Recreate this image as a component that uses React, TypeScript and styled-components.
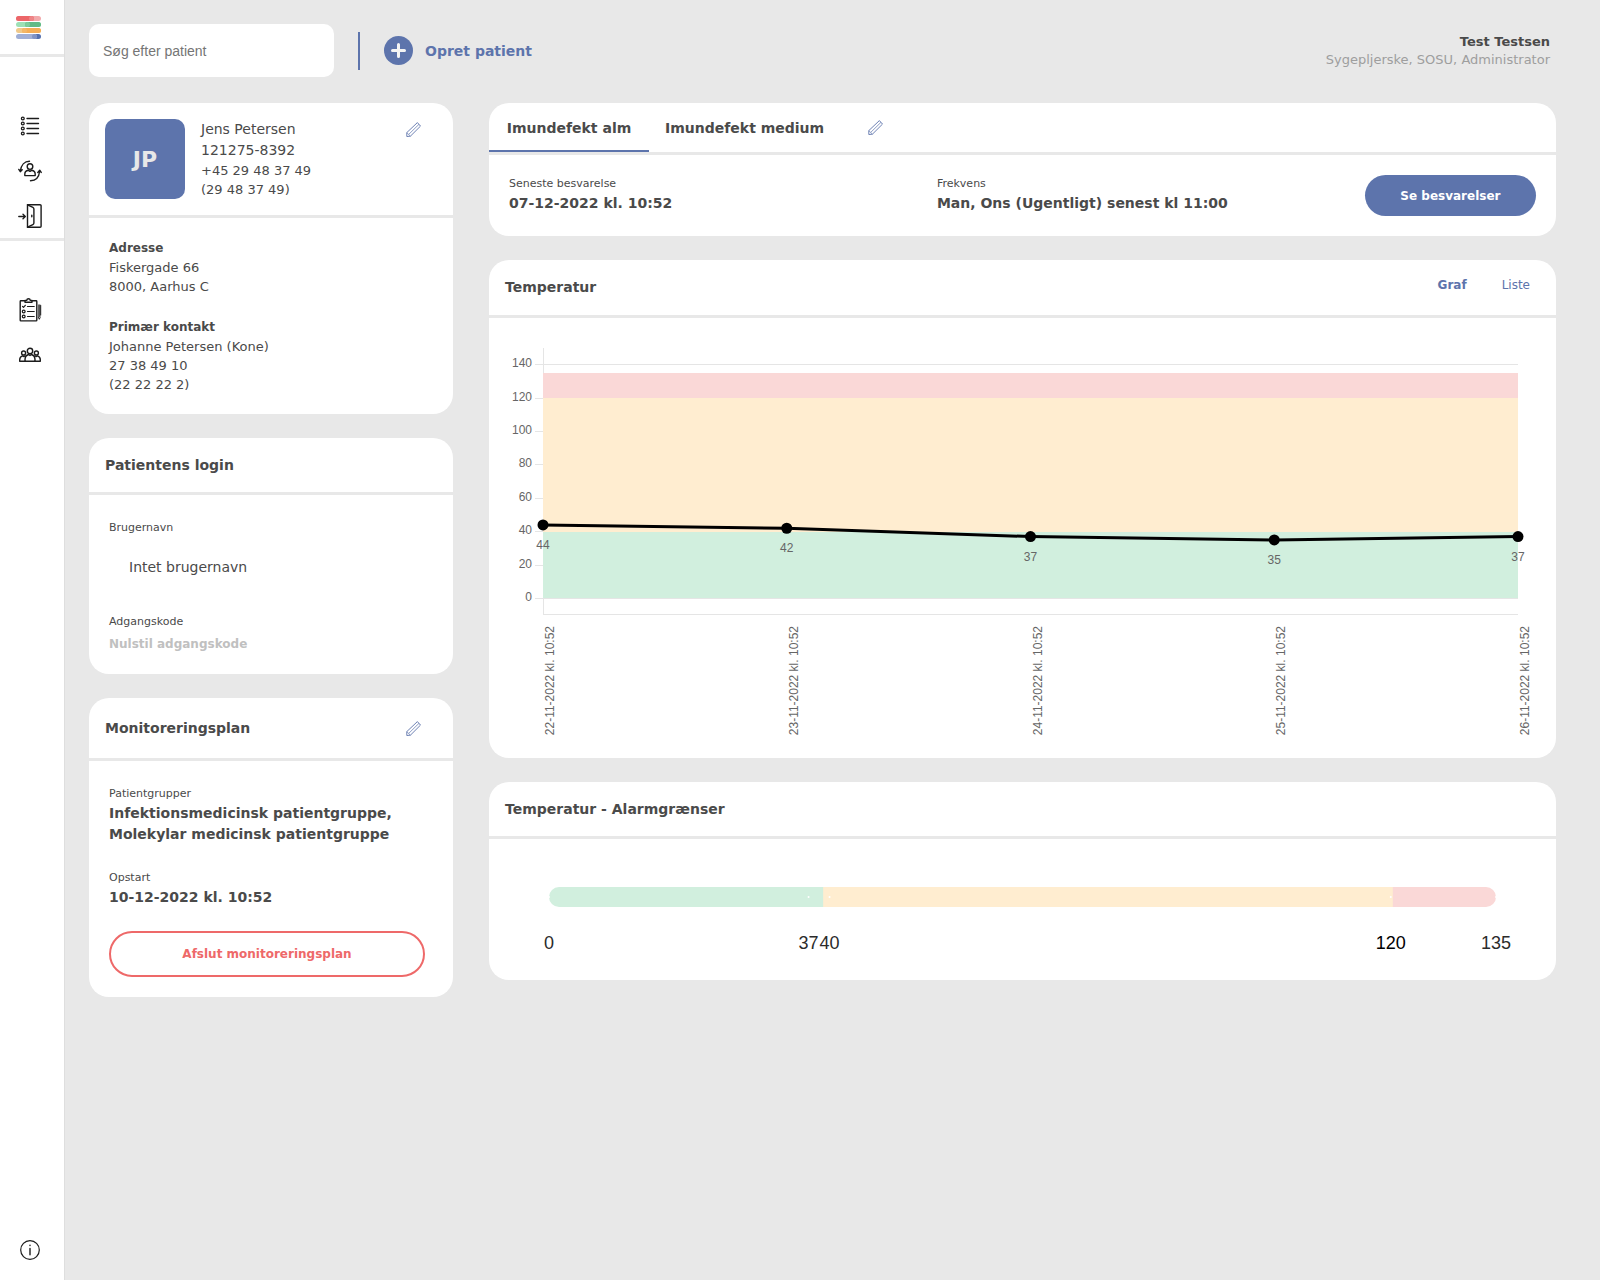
import React, { useState } from "react";
import styled, { createGlobalStyle } from "styled-components";

const color = {
  page: "#e8e8e8",
  card: "#ffffff",
  text: "#4a4a4a",
  muted: "#9e9e9e",
  disabled: "#c0c0c0",
  blue: "#5d74ac",
  red: "#ee6969",
  grid: "#e5e5e5",
  chartText: "#666666",
  bandRed: "#fad8d7",
  bandYellow: "#ffedd0",
  bandGreen: "#d1efde",
};

const sans = `"DejaVu Sans", Verdana, sans-serif`;
const arial = `"Liberation Sans", Arial, sans-serif`;

const GlobalStyle = createGlobalStyle`
  *, *::before, *::after { box-sizing: border-box; }
  body {
    margin: 0;
    background: ${color.page};
    color: ${color.text};
    font-family: ${sans};
  }
  button { font-family: inherit; cursor: pointer; }
`;

/* ---------- Shell ---------- */

const Shell = styled.div`
  display: flex;
  min-height: 100vh;
`;

const Sidebar = styled.nav`
  flex: none;
  width: 65px;
  display: flex;
  flex-direction: column;
  background: ${color.card};
  border-right: 1px solid #dedede;
`;

const LogoLink = styled.a`
  display: block;
  height: 57px;
  padding: 16px 0 0 16px;
  border-bottom: 3px solid ${color.page};
`;

const NavGroup = styled.div<{ $divided?: boolean }>`
  display: flex;
  flex-direction: column;
  padding-top: 46px;
  border-bottom: ${(p) => (p.$divided ? `3px solid ${color.page}` : "none")};
`;

const NavFooter = styled.div`
  margin-top: auto;
  padding-bottom: 8px;
`;

const NavLink = styled.a`
  display: flex;
  align-items: center;
  height: 45px;
  padding-left: 18px;
`;

const Main = styled.main`
  flex: 1;
  min-width: 0;
  padding: 24px 44px 24px 24px;
`;

const TopBar = styled.header`
  display: flex;
  align-items: center;
  gap: 24px;
  margin-bottom: 26px;
`;

const SearchBox = styled.input`
  width: 245px;
  height: 53px;
  padding: 0 14px;
  border: 0;
  border-radius: 10px;
  background: ${color.card};
  color: ${color.text};
  font: 14px ${arial};
  &::placeholder { color: #757575; }
`;

const Separator = styled.span`
  width: 2px;
  height: 38px;
  background: ${color.blue};
`;

const CreateButton = styled.button`
  display: flex;
  align-items: center;
  gap: 12px;
  padding: 0;
  border: 0;
  background: none;
  color: ${color.blue};
  font-size: 14px;
  font-weight: 700;
`;

const UserInfo = styled.div`
  margin-left: auto;
  padding-right: 6px;
  text-align: right;
  font-size: 13px;
  line-height: 18px;
`;

const UserRole = styled.div`
  color: ${color.muted};
`;

const Columns = styled.div`
  display: grid;
  grid-template-columns: 364px minmax(0, 1fr);
  gap: 36px;
  align-items: start;
`;

const Column = styled.div`
  display: grid;
  gap: 24px;
`;

/* ---------- Cards ---------- */

const Card = styled.section`
  overflow: hidden;
  border-radius: 20px;
  background: ${color.card};
`;

const CardHeader = styled.div<{ $height: number }>`
  display: flex;
  align-items: center;
  justify-content: space-between;
  height: ${(p) => p.$height}px;
  padding: 0 24px 0 16px;
  border-bottom: 3px solid ${color.page};
`;

const CardTitle = styled.h2`
  margin: 0;
  font-size: 14px;
  line-height: 21px;
`;

const CardBody = styled.div<{ $top: number }>`
  padding: ${(p) => p.$top}px 20px 20px;
`;

const IconButton = styled.button`
  display: flex;
  padding: 8px;
  border: 0;
  background: none;
  color: ${color.blue};
`;

const PersonHeader = styled.div`
  display: flex;
  align-items: flex-start;
  gap: 16px;
  padding: 16px 24px 16px 16px;
  border-bottom: 3px solid ${color.page};
  ${IconButton} { margin-left: auto; margin-top: -5px; }
`;

const Avatar = styled.div`
  display: grid;
  place-items: center;
  width: 80px;
  height: 80px;
  border-radius: 10px;
  background: ${color.blue};
  color: ${color.page};
  font-size: 22px;
  font-weight: 700;
`;

const Line = styled.div<{ $small?: boolean }>`
  font-size: ${(p) => (p.$small ? 13 : 14)}px;
  line-height: ${(p) => (p.$small ? 19 : 21)}px;
`;

const Block = styled.div`
  & + & { margin-top: 21px; }
`;

const BlockTitle = styled.h3`
  margin: 0;
  font-size: 12px;
  line-height: 20px;
`;

const Field = styled.div<{ $after?: number }>`
  margin-bottom: ${(p) => p.$after ?? 0}px;
`;

const FieldLabel = styled.div`
  font-size: 11px;
  line-height: 18px;
`;

const FieldValue = styled.div`
  font-size: 14px;
  font-weight: 700;
  line-height: 21px;
`;

const UserName = styled(Line)`
  padding: 20px;
`;

const ResetButton = styled.button`
  display: block;
  padding: 3px 0 0;
  border: 0;
  background: none;
  color: ${color.disabled};
  font-size: 12px;
  font-weight: 700;
  line-height: 20px;
`;

const EndPlanButton = styled.button`
  display: block;
  width: calc(100% - 8px);
  height: 46px;
  border: 2px solid ${color.red};
  border-radius: 23px;
  background: none;
  color: ${color.red};
  font-size: 12px;
  font-weight: 700;
`;

const TabBar = styled.div`
  display: flex;
  align-items: center;
  border-bottom: 3px solid ${color.page};
  ${IconButton} { margin-left: 20px; }
`;

const Tab = styled.button<{ $active: boolean }>`
  min-width: 160px;
  height: 49px;
  padding: 2px 16px 0;
  border: 0;
  border-bottom: 2px solid ${(p) => (p.$active ? color.blue : "transparent")};
  background: none;
  color: ${color.text};
  font-size: 14px;
  font-weight: 700;
`;

const PlanSummary = styled.div`
  display: grid;
  grid-template-columns: 5fr 5fr 2fr;
  padding: 20px;
`;

const AnswersButton = styled.button`
  height: 41px;
  border: 0;
  border-radius: 21px;
  background: ${color.blue};
  color: #fff;
  font-size: 12px;
  font-weight: 700;
`;

const ViewSwitch = styled.div`
  display: flex;
  gap: 35px;
  padding: 0 2px 6px 0;
`;

const ViewButton = styled.button<{ $active: boolean }>`
  padding: 0;
  border: 0;
  background: none;
  color: ${color.blue};
  font-size: 12px;
  font-weight: ${(p) => (p.$active ? 700 : 400)};
`;

const ChartArea = styled.div`
  padding: 30px 38px 24px 54px;
`;

const GaugeArea = styled.div`
  padding: 48px 60px 20px;
`;

const Drawing = styled.svg<{ $height: number }>`
  display: block;
  width: 100%;
  height: ${(p) => p.$height}px;
  overflow: visible;
`;

const ChartText = styled.text`
  fill: ${color.chartText};
  font: 12px ${arial};
`;

const GaugeText = styled.text<{ $dark?: boolean }>`
  fill: ${(p) => (p.$dark ? "#000" : "#2b2b2b")};
  font: 18px ${arial};
  text-anchor: middle;
`;

/* ---------- Icons ---------- */

const Logo = () => (
  <svg width="25" height="24" viewBox="0 0 25 24" aria-hidden="true">
    <rect width="25" height="5" rx="2.5" fill="#f2a9ab" />
    <rect width="18" height="5" rx="2.5" fill="#ec6669" />
    <circle cx="15.5" cy="2.5" r="2.5" fill="#ee8587" />
    <rect y="6" width="25" height="5" rx="2.5" fill="#9ce0b5" />
    <rect x="9" y="6" width="16" height="5" rx="2.5" fill="#62ba86" />
    <circle cx="11.5" cy="8.5" r="2.5" fill="#7ccb9b" />
    <rect y="12" width="25" height="5" rx="2.5" fill="#f0c98a" />
    <rect x="6" y="12" width="19" height="5" rx="2.5" fill="#f5ad55" />
    <circle cx="8.5" cy="14.5" r="2.5" fill="#f3b768" />
    <rect x="14" y="18" width="11" height="5" rx="2.5" fill="#5470af" />
    <rect y="18" width="21" height="5" rx="2.5" fill="#a0afd6" />
    <circle cx="18.5" cy="20.5" r="2.5" fill="#8093c4" />
  </svg>
);

const LineIcon = ({ children }: { children: React.ReactNode }) => (
  <svg
    width="24"
    height="24"
    viewBox="0 0 24 24"
    fill="none"
    stroke="#1c1c1c"
    strokeWidth="1.4"
    strokeLinecap="round"
    strokeLinejoin="round"
    aria-hidden="true"
  >
    {children}
  </svg>
);

const ListIcon = () => (
  <LineIcon>
    {[4.5, 9.5, 14.5, 19.5].map((y) => (
      <g key={y}>
        <circle cx="4.8" cy={y} r="1.4" strokeWidth="1.3" />
        <path d={`M9 ${y}H20.5`} />
      </g>
    ))}
  </LineIcon>
);

const PatientCycleIcon = () => (
  <LineIcon>
    <circle cx="12" cy="7.6" r="2.8" />
    <path d="M6.8 16.6v-1.4c0-2.2 1.8-3.6 3.6-3.9l1.6 1 1.6-1c1.8.3 3.6 1.7 3.6 3.9v1.4z" />
    <path d="M11.5 2.2C6.600 2.200 3 6 2.300 12.200M.8 10.400l1.500 2.300 1.900-1.900" />
    <path d="M12.500 21.800c4.900 0 8.500-3.600 9.200-9.800M19.800 13.400l1.900-2.200 1.500 2.200" />
  </LineIcon>
);

const DoorIcon = () => (
  <LineIcon>
    <path d="M9.500.8h12.600a1 1 0 0 1 1 1v20.400a1 1 0 0 1-1 1H9.500z" />
    <path d="M9.500.8l5.400 2.600q1 .5 1 1.600v14q0 1.100-1 1.600l-5.400 2.600M13.800 11.200v1.600" />
    <path d="M.8 12.500h6.400M5 10.300l2.300 2.200L5 14.700" />
  </LineIcon>
);

const ClipboardIcon = () => (
  <LineIcon>
    <path d="M7 2.800H2.900a.7.700 0 0 0-.7.700v18.700a.7.700 0 0 0 .7.700h15.200a.7.700 0 0 0 .7-.700V3.500a.7.700 0 0 0-.7-.700h-4.100" />
    <path d="M7 4.200V2.400h1.700C9 .2 12 .2 12.300 2.400H14v1.800z" />
    <path d="M4.500 8.300l1 1 1.800-2M9.500 8.500h6.700M9.500 13.500h6.700M9.500 18.500h6.700" strokeWidth="1.200" />
    <circle cx="5.700" cy="13.500" r="1.400" strokeWidth="1.200" />
    <circle cx="5.700" cy="18.500" r="1.400" strokeWidth="1.200" />
    <path d="M21.300 6.500v12.500" stroke="#555" strokeWidth="2.400" strokeLinecap="butt" />
    <path d="M22.700 7.500V17M20.500 19.500l.8 1.800.8-1.800" strokeWidth="1" />
  </LineIcon>
);

const PeopleIcon = () => (
  <LineIcon>
    <circle cx="12" cy="8" r="2.700" />
    <circle cx="5.600" cy="10" r="2" />
    <circle cx="18.400" cy="10" r="2" />
    <path d="M7 18.200v-1.500c0-3 2-4.700 3.600-5.200l1.400 1 1.400-1c1.600.5 3.600 2.200 3.600 5.200v1.500z" />
    <path d="M7 18.200H1.700v-1.400c0-2.100 1.300-3.500 2.700-4l1.200.7 1.500-.7" />
    <path d="M17 18.200h5.300v-1.400c0-2.100-1.300-3.500-2.700-4l-1.200.7-1.500-.7" />
  </LineIcon>
);

const InfoIcon = () => (
  <LineIcon>
    <circle cx="12" cy="12" r="9.300" strokeWidth="1.200" />
    <path d="M12 10.500v6.200M12 7.200v.3" />
  </LineIcon>
);

const PencilIcon = () => (
  <svg
    width="15"
    height="15"
    viewBox="0 0 15 15"
    fill="none"
    stroke="currentColor"
    strokeLinejoin="round"
    aria-hidden="true"
  >
    <path d="M.8 10.600L11.400.6l3.100 3.500L4.400 14.200l-3.600.3z" strokeWidth="0.900" />
    <path d="M.8 10.600l3.600 3.600M2.800 12.300L12.900 2.400" strokeWidth="0.700" />
  </svg>
);

const PlusIcon = () => (
  <svg width="29" height="29" viewBox="0 0 29 29" aria-hidden="true">
    <circle cx="14.500" cy="14.500" r="14.500" fill={color.blue} />
    <path d="M14.500 8.500v12M8.500 14.500h12" stroke="#f4f4f4" strokeWidth="3" strokeLinecap="round" />
  </svg>
);

/* ---------- Chart ---------- */

const readings = [
  { label: "22-11-2022 kl. 10:52", value: 44 },
  { label: "23-11-2022 kl. 10:52", value: 42 },
  { label: "24-11-2022 kl. 10:52", value: 37 },
  { label: "25-11-2022 kl. 10:52", value: 35 },
  { label: "26-11-2022 kl. 10:52", value: 37 },
];

const bands = [
  { from: 0, to: 40, fill: color.bandGreen },
  { from: 40, to: 120, fill: color.bandYellow },
  { from: 120, to: 135, fill: color.bandRed },
];

const yOf = (value: number) => 250.4 - value * 1.67;
const xOf = (index: number) => `${(index * 100) / (readings.length - 1)}%`;

const TemperatureChart = () => (
  <Drawing $height={386} role="img" aria-label="Temperatur">
    {[0, 20, 40, 60, 80, 100, 120, 140].map((v) => {
      const y = Math.floor(yOf(v)) + 0.5;
      return (
        <g key={v}>
          <line x1="-8" x2="100%" y1={y} y2={y} stroke={color.grid} />
          <ChartText x="-11" y={Math.floor(y) + 3} textAnchor="end">
            {v}
          </ChartText>
        </g>
      );
    })}
    {bands.map((b) => (
      <rect
        key={b.from}
        x="0"
        width="100%"
        y={Math.round(yOf(b.to))}
        height={Math.round(yOf(b.from)) - Math.round(yOf(b.to))}
        fill={b.fill}
      />
    ))}
    <line x1="0.500" x2="0.500" y1="0" y2="25" stroke={color.grid} />
    <line x1="0.500" x2="0.500" y1="251" y2="267" stroke={color.grid} />
    <line x1="0" x2="100%" y1="266.500" y2="266.500" stroke={color.grid} />
    {readings.slice(1).map((r, i) => (
      <line
        key={r.label}
        x1={xOf(i)}
        y1={yOf(readings[i].value)}
        x2={xOf(i + 1)}
        y2={yOf(r.value)}
        stroke="#000"
        strokeWidth="3"
      />
    ))}
    {readings.map((r, i) => (
      <svg key={r.label} x={xOf(i)} overflow="visible">
        <circle cx="0" cy={yOf(r.value)} r="5.500" />
        <ChartText x="0" y={Math.round(yOf(r.value)) + 24} textAnchor="middle">
          {r.value}
        </ChartText>
        <ChartText transform="translate(11 278) rotate(-90)" textAnchor="end">
          {r.label}
        </ChartText>
      </svg>
    ))}
  </Drawing>
);

const gaugeMax = 135;
const gaugeMarks = [0, 37, 40, 120, 135];

const AlarmGauge = () => (
  <Drawing $height={73} role="img" aria-label="Alarmgrænser">
    <rect width="50%" height="20" rx="10" fill={color.bandGreen} />
    <rect x="50%" width="50%" height="20" rx="10" fill={color.bandRed} />
    <rect x="28.950%" width="60.150%" height="20" fill={color.bandYellow} />
    {gaugeMarks.map((v) => {
      const x = `${(v * 100) / gaugeMax}%`;
      return (
        <g key={v}>
          <circle cx={x} cy="10" r="1" fill="#fff" />
          <GaugeText x={x} y="62" $dark={v === 120}>
            {v}
          </GaugeText>
        </g>
      );
    })}
  </Drawing>
);

/* ---------- Page ---------- */

const EditButton = ({ label }: { label: string }) => (
  <IconButton type="button" aria-label={label}>
    <PencilIcon />
  </IconButton>
);

const plans = ["Imundefekt alm", "Imundefekt medium"];
const views = ["Graf", "Liste"];

export default function App() {
  const [plan, setPlan] = useState(plans[0]);
  const [view, setView] = useState(views[0]);

  return (
    <>
      <GlobalStyle />
      <Shell>
        <Sidebar>
          <LogoLink href="#" aria-label="Forside">
            <Logo />
          </LogoLink>
          <NavGroup $divided>
            <NavLink href="#opgaver" aria-label="Opgaveliste"><ListIcon /></NavLink>
            <NavLink href="#aktive" aria-label="Aktive patienter"><PatientCycleIcon /></NavLink>
            <NavLink href="#afsluttede" aria-label="Afsluttede patienter"><DoorIcon /></NavLink>
          </NavGroup>
          <NavGroup>
            <NavLink href="#skemaer" aria-label="Spørgeskemaer"><ClipboardIcon /></NavLink>
            <NavLink href="#grupper" aria-label="Patientgrupper"><PeopleIcon /></NavLink>
          </NavGroup>
          <NavFooter>
            <NavLink href="#om" aria-label="Om"><InfoIcon /></NavLink>
          </NavFooter>
        </Sidebar>

        <Main>
          <TopBar>
            <SearchBox type="search" aria-label="Søg efter patient" placeholder="Søg efter patient" />
            <Separator />
            <CreateButton type="button">
              <PlusIcon />
              Opret patient
            </CreateButton>
            <UserInfo>
              <strong>Test Testsen</strong>
              <UserRole>Sygepljerske, SOSU, Administrator</UserRole>
            </UserInfo>
          </TopBar>

          <Columns>
            <Column>
              <Card>
                <PersonHeader>
                  <Avatar>JP</Avatar>
                  <div>
                    <Line>Jens Petersen</Line>
                    <Line>121275-8392</Line>
                    <Line $small>+45 29 48 37 49</Line>
                    <Line $small>(29 48 37 49)</Line>
                  </div>
                  <EditButton label="Rediger patient" />
                </PersonHeader>
                <CardBody $top={20}>
                  <Block>
                    <BlockTitle>Adresse</BlockTitle>
                    <Line $small>Fiskergade 66</Line>
                    <Line $small>8000, Aarhus C</Line>
                  </Block>
                  <Block>
                    <BlockTitle>Primær kontakt</BlockTitle>
                    <Line $small>Johanne Petersen (Kone)</Line>
                    <Line $small>27 38 49 10</Line>
                    <Line $small>(22 22 22 2)</Line>
                  </Block>
                </CardBody>
              </Card>

              <Card>
                <CardHeader $height={57}>
                  <CardTitle>Patientens login</CardTitle>
                </CardHeader>
                <CardBody $top={24}>
                  <Field $after={15}>
                    <FieldLabel>Brugernavn</FieldLabel>
                    <UserName>Intet brugernavn</UserName>
                  </Field>
                  <Field>
                    <FieldLabel>Adgangskode</FieldLabel>
                    <ResetButton type="button">Nulstil adgangskode</ResetButton>
                  </Field>
                </CardBody>
              </Card>

              <Card>
                <CardHeader $height={63}>
                  <CardTitle>Monitoreringsplan</CardTitle>
                  <EditButton label="Rediger monitoreringsplan" />
                </CardHeader>
                <CardBody $top={24}>
                  <Field $after={24}>
                    <FieldLabel>Patientgrupper</FieldLabel>
                    <FieldValue>Infektionsmedicinsk patientgruppe, Molekylar medicinsk patientgruppe</FieldValue>
                  </Field>
                  <Field $after={23}>
                    <FieldLabel>Opstart</FieldLabel>
                    <FieldValue>10-12-2022 kl. 10:52</FieldValue>
                  </Field>
                  <EndPlanButton type="button">Afslut monitoreringsplan</EndPlanButton>
                </CardBody>
              </Card>
            </Column>

            <Column>
              <Card>
                <TabBar role="tablist">
                  {plans.map((name) => (
                    <Tab
                      key={name}
                      type="button"
                      role="tab"
                      aria-selected={plan === name}
                      $active={plan === name}
                      onClick={() => setPlan(name)}
                    >
                      {name}
                    </Tab>
                  ))}
                  <EditButton label="Rediger spørgeskemaer" />
                </TabBar>
                <PlanSummary>
                  <Field>
                    <FieldLabel>Seneste besvarelse</FieldLabel>
                    <FieldValue>07-12-2022 kl. 10:52</FieldValue>
                  </Field>
                  <Field>
                    <FieldLabel>Frekvens</FieldLabel>
                    <FieldValue>Man, Ons (Ugentligt) senest kl 11:00</FieldValue>
                  </Field>
                  <AnswersButton type="button">Se besvarelser</AnswersButton>
                </PlanSummary>
              </Card>

              <Card>
                <CardHeader $height={58}>
                  <CardTitle>Temperatur</CardTitle>
                  <ViewSwitch>
                    {views.map((name) => (
                      <ViewButton key={name} type="button" $active={view === name} onClick={() => setView(name)}>
                        {name}
                      </ViewButton>
                    ))}
                  </ViewSwitch>
                </CardHeader>
                <ChartArea>
                  <TemperatureChart />
                </ChartArea>
              </Card>

              <Card>
                <CardHeader $height={57}>
                  <CardTitle>Temperatur - Alarmgrænser</CardTitle>
                </CardHeader>
                <GaugeArea>
                  <AlarmGauge />
                </GaugeArea>
              </Card>
            </Column>
          </Columns>
        </Main>
      </Shell>
    </>
  );
}
